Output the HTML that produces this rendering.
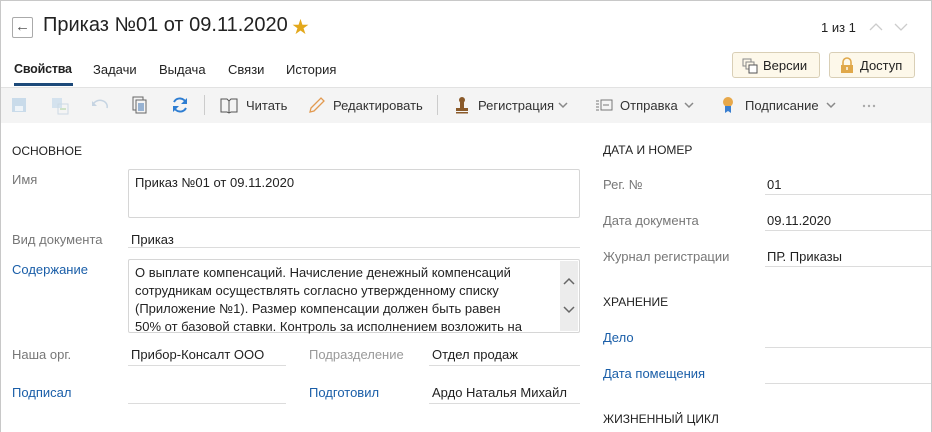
<!DOCTYPE html>
<html><head><meta charset="utf-8"><style>
*{margin:0;padding:0;box-sizing:border-box}
body{width:932px;height:432px;overflow:hidden;background:#fff;font-family:"Liberation Sans","Noto Sans CJK SC",sans-serif;font-size:13px;color:#222;position:relative}
.a{position:absolute;white-space:nowrap}
.frame{position:absolute;left:0;top:0;width:932px;height:432px;border:1px solid #c8c8c8;border-bottom:none}
.lbl{color:#777}
.lnk{color:#1a5ea8}
.line{position:absolute;height:1px;background:#dcdcdc}
.box{position:absolute;border:1px solid #d6d6d6;border-radius:2px}
.btn{position:absolute;height:26px;top:52px;background:#fdf8ea;border:1px solid #d9cfb6;border-radius:3px;font-size:13px;padding:5px 0 0 30px}
.tb{font-size:13px;color:#333}
</style></head><body>
<div class="frame"></div>
<div class="a" style="left:12px;top:17px;width:21px;height:21px;border:1px solid #aaa;border-radius:2px;font-size:15px;line-height:18px;text-align:center;color:#555">&#8592;</div>
<div class="a" style="left:43px;top:14px;font-size:20px;color:#222">Приказ №01 от 09.11.2020</div>
<div class="a" style="left:292px;top:13px;font-size:17px;color:#e3a81c">★</div>
<div class="a" style="left:821px;top:20px;font-size:13px">1 из 1</div>
<svg class="a" style="left:869px;top:22px" width="14" height="10"><path d="M1 8l6-6 6 6" fill="none" stroke="#ccc" stroke-width="1.3"/></svg>
<svg class="a" style="left:894px;top:22px" width="14" height="10"><path d="M1 2l6 6 6-6" fill="none" stroke="#ccc" stroke-width="1.3"/></svg>
<div class="a" style="left:14px;top:62px;font-size:12.5px;font-weight:bold;color:#222;letter-spacing:-0.2px">Свойства</div>
<div class="a" style="left:14px;top:83px;width:59px;height:3px;background:#1d4a7a"></div>
<div class="a" style="left:93px;top:62px">Задачи</div>
<div class="a" style="left:159px;top:62px">Выдача</div>
<div class="a" style="left:228px;top:62px">Связи</div>
<div class="a" style="left:286px;top:62px">История</div>
<div class="btn" style="left:732px;width:88px">Версии
<svg class="a" style="left:9px;top:5px" width="16" height="16"><rect x="1" y="1" width="8" height="7" fill="none" stroke="#888"/><rect x="4" y="4" width="8" height="7" fill="#fdf8ea" stroke="#888"/><rect x="7" y="7" width="8" height="8" fill="#fff" stroke="#555"/></svg></div>
<div class="btn" style="left:829px;width:86px">Доступ
<svg class="a" style="left:10px;top:4px" width="14" height="16"><path d="M3 8V5a4 4 0 0 1 8 0v3" fill="none" stroke="#e0a84a" stroke-width="1.6"/><rect x="1" y="8" width="12" height="8" fill="#e0a84a"/><rect x="6.3" y="10" width="1.4" height="3" fill="#fff"/></svg></div>
<div class="a" style="left:1px;top:87px;width:930px;height:36px;background:#f4f4f4;border-top:1px solid #e2e2e2"></div>
<svg class="a" style="left:11px;top:97px" width="16" height="16"><rect x="1" y="1" width="14" height="14" fill="#c9dbea"/><rect x="4" y="9" width="8" height="5" fill="#eef4f9"/></svg>
<svg class="a" style="left:51px;top:97px" width="18" height="18"><rect x="1" y="1" width="10" height="10" fill="#d4e2ee"/><rect x="7" y="7" width="10" height="10" fill="none" stroke="#cdd9e4"/><path d="M9 12h6" stroke="#a9d19a"/></svg>
<svg class="a" style="left:91px;top:99px" width="18" height="12"><path d="M2 6a7 6 0 0 1 14 3" fill="none" stroke="#c6d4e2" stroke-width="1.5"/><path d="M1 2v5h5z" fill="#c6d4e2"/></svg>
<svg class="a" style="left:132px;top:96px" width="16" height="18"><rect x="1" y="1" width="10" height="13" fill="none" stroke="#666"/><rect x="4" y="4" width="10" height="13" fill="#f4f4f4" stroke="#666"/><path d="M6 8h6M6 10h6M6 12h6M6 14h6" stroke="#3a6fb0"/></svg>
<svg class="a" style="left:171px;top:96px" width="18" height="18"><path d="M15 7A6.5 6.5 0 0 0 3 6M3 11a6.5 6.5 0 0 0 12 1" fill="none" stroke="#2d7dd2" stroke-width="2"/><path d="M16 2v6h-6zM2 16v-6h6z" fill="#2d7dd2"/></svg>
<div class="a" style="left:204px;top:95px;width:1px;height:20px;background:#ccc"></div>
<svg class="a" style="left:220px;top:97px" width="18" height="17"><path d="M1 2h6l2 2 2-2h6v13h-6l-2 1-2-1H1z M9 4v12" fill="none" stroke="#555"/></svg>
<div class="a tb" style="left:246px;top:98px">Читать</div>
<svg class="a" style="left:308px;top:96px" width="18" height="18"><path d="M2 16l1-4 10-10 3 3-10 10z" fill="none" stroke="#e29a50" stroke-width="1.3"/></svg>
<div class="a tb" style="left:333px;top:98px">Редактировать</div>
<div class="a" style="left:437px;top:95px;width:1px;height:20px;background:#ccc"></div>
<svg class="a" style="left:455px;top:96px" width="14" height="18"><circle cx="7" cy="4" r="3" fill="#8a5a2a"/><rect x="5" y="6" width="4" height="6" fill="#8a5a2a"/><rect x="1" y="12" width="12" height="3" fill="#8a5a2a"/><rect x="1" y="16" width="12" height="1.5" fill="#8a5a2a"/></svg>
<div class="a tb" style="left:478px;top:98px">Регистрация</div>
<svg class="a" style="left:558px;top:102px" width="10" height="7"><path d="M1 1l4 4 4-4" fill="none" stroke="#888" stroke-width="1.5"/></svg>
<svg class="a" style="left:595px;top:99px" width="18" height="12"><path d="M1 2h3M1 5h3M1 8h3M1 11h3" stroke="#777"/><rect x="6" y="1" width="11" height="10" fill="none" stroke="#777"/><path d="M8 6h6" stroke="#777"/></svg>
<div class="a tb" style="left:620px;top:98px">Отправка</div>
<svg class="a" style="left:684px;top:102px" width="10" height="7"><path d="M1 1l4 4 4-4" fill="none" stroke="#888" stroke-width="1.5"/></svg>
<svg class="a" style="left:722px;top:96px" width="12" height="18"><circle cx="6" cy="6" r="5" fill="#e7a84a"/><path d="M3 10v7l3-2 3 2v-7" fill="#3a7fd0"/></svg>
<div class="a tb" style="left:745px;top:98px">Подписание</div>
<svg class="a" style="left:826px;top:102px" width="10" height="7"><path d="M1 1l4 4 4-4" fill="none" stroke="#888" stroke-width="1.5"/></svg>
<svg class="a" style="left:862px;top:104px" width="14" height="4"><circle cx="2" cy="2" r="1.2" fill="#aaa"/><circle cx="7" cy="2" r="1.2" fill="#aaa"/><circle cx="12" cy="2" r="1.2" fill="#aaa"/></svg>
<div class="a" style="left:12px;top:144px;font-size:12px">ОСНОВНОЕ</div>
<div class="a lbl" style="left:12px;top:172px">Имя</div>
<div class="box" style="left:128px;top:169px;width:452px;height:49px"></div>
<div class="a" style="left:135px;top:175px">Приказ №01 от 09.11.2020</div>
<div class="a lbl" style="left:12px;top:232px">Вид документа</div>
<div class="a" style="left:131px;top:232px">Приказ</div>
<div class="line" style="left:128px;top:247px;width:452px"></div>
<div class="a lnk" style="left:12px;top:262px">Содержание</div>
<div class="box" style="left:128px;top:259px;width:452px;height:74px;overflow:hidden"></div>
<div class="a" style="left:135px;top:264px;line-height:18px;font-size:13px">О выплате компенсаций. Начисление денежный компенсаций<br>сотрудникам осуществлять согласно утвержденному списку<br>(Приложение №1). Размер компенсации должен быть равен<br>50% от базовой ставки. Контроль за исполнением возложить на</div>
<div class="a" style="left:560px;top:261px;width:18px;height:70px;background:#ececec"></div>
<svg class="a" style="left:563px;top:277px" width="12" height="8"><path d="M1 7l5-5 5 5" fill="none" stroke="#666" stroke-width="1.5"/></svg>
<svg class="a" style="left:563px;top:306px" width="12" height="8"><path d="M1 1l5 5 5-5" fill="none" stroke="#666" stroke-width="1.5"/></svg>
<div class="a lbl" style="left:12px;top:347px">Наша орг.</div>
<div class="a" style="left:131px;top:347px">Прибор-Консалт ООО</div>
<div class="line" style="left:128px;top:365px;width:158px"></div>
<div class="a lbl" style="left:309px;top:347px;color:#999">Подразделение</div>
<div class="a" style="left:432px;top:347px">Отдел продаж</div>
<div class="line" style="left:429px;top:365px;width:151px"></div>
<div class="a lnk" style="left:12px;top:385px">Подписал</div>
<div class="line" style="left:128px;top:403px;width:158px"></div>
<div class="a lnk" style="left:309px;top:385px">Подготовил</div>
<div class="a" style="left:432px;top:385px">Ардо Наталья Михайл</div>
<div class="line" style="left:429px;top:403px;width:151px"></div>
<div class="a" style="left:603px;top:143px;font-size:12px">ДАТА И НОМЕР</div>
<div class="a lbl" style="left:603px;top:177px">Рег. №</div>
<div class="a" style="left:767px;top:177px">01</div>
<div class="line" style="left:765px;top:194px;width:166px"></div>
<div class="a lbl" style="left:603px;top:213px">Дата документа</div>
<div class="a" style="left:767px;top:213px">09.11.2020</div>
<div class="line" style="left:765px;top:230px;width:166px"></div>
<div class="a lbl" style="left:603px;top:249px">Журнал регистрации</div>
<div class="a" style="left:767px;top:249px">ПР. Приказы</div>
<div class="line" style="left:765px;top:266px;width:166px"></div>
<div class="a" style="left:603px;top:295px;font-size:12px">ХРАНЕНИЕ</div>
<div class="a lnk" style="left:603px;top:330px">Дело</div>
<div class="line" style="left:765px;top:347px;width:166px"></div>
<div class="a lnk" style="left:603px;top:366px">Дата помещения</div>
<div class="line" style="left:765px;top:383px;width:166px"></div>
<div class="a" style="left:603px;top:412px;font-size:12px">ЖИЗНЕННЫЙ ЦИКЛ</div>
</body></html>
